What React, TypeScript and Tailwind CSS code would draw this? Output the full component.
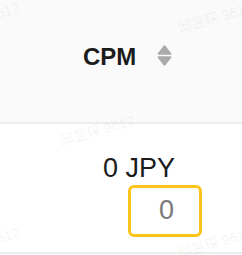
import React from 'react';

const FONT = { fontFamily: '"Liberation Sans", Arial, "Noto Sans CJK SC", sans-serif' };

function Watermark({ className }: { className: string }) {
  return (
    <span
      className={`pointer-events-none absolute whitespace-nowrap text-[14px] leading-none text-black/[0.06] origin-bottom-left -rotate-[16deg] ${className}`}
    >
      邱昱琛 9612
    </span>
  );
}

function SortIcon() {
  return (
    <svg width="15" height="21" viewBox="0 0 15 21">
      <path d="M6.4 0.9 Q7.5 -0.2 8.6 0.9 L14.2 8.3 Q14.8 9.6 13.4 9.8 L1.6 9.8 Q0.2 9.6 0.8 8.3 Z" fill="#ababab" />
      <path d="M6.4 20.1 Q7.5 21.2 8.6 20.1 L14.2 12.7 Q14.8 11.4 13.4 11.2 L1.6 11.2 Q0.2 11.4 0.8 12.7 Z" fill="#ababab" />
    </svg>
  );
}

export default function App() {
  return (
    <div className="relative w-[242px] h-[255px] overflow-hidden bg-white" style={FONT}>
      {/* Header */}
      <div className="h-[124px] bg-[#fafafa] border-b-2 border-[#ededed] pt-[45px] pl-[83px]">
        <div className="flex items-start gap-[21px]">
          <span className="text-[24px] leading-none font-bold text-[#1c1c1c]">CPM</span>
          <SortIcon />
        </div>
      </div>

      {/* Row */}
      <div className="h-[130px] border-b-2 border-[#ededed] pt-[31px]">
        <div className="pl-[103px] text-[27px] leading-none text-[#1c1c1c]">0 JPY</div>
        <div className="ml-[128px] mt-[3px] w-[74px] h-[52px] rounded-[6px] border-[3px] border-[#fbc41a] flex justify-end pr-[25px] pt-[9px]">
          <span className="text-[27px] leading-none text-[#7a7a7a]">0</span>
        </div>
      </div>

      {/* Watermarks */}
      <Watermark className="left-[-53px] top-[21px]" />
      <Watermark className="left-[180px] top-[21px]" />
      <Watermark className="left-[62px] top-[134px]" />
      <Watermark className="left-[-53px] top-[246px]" />
      <Watermark className="left-[180px] top-[246px]" />
    </div>
  );
}
